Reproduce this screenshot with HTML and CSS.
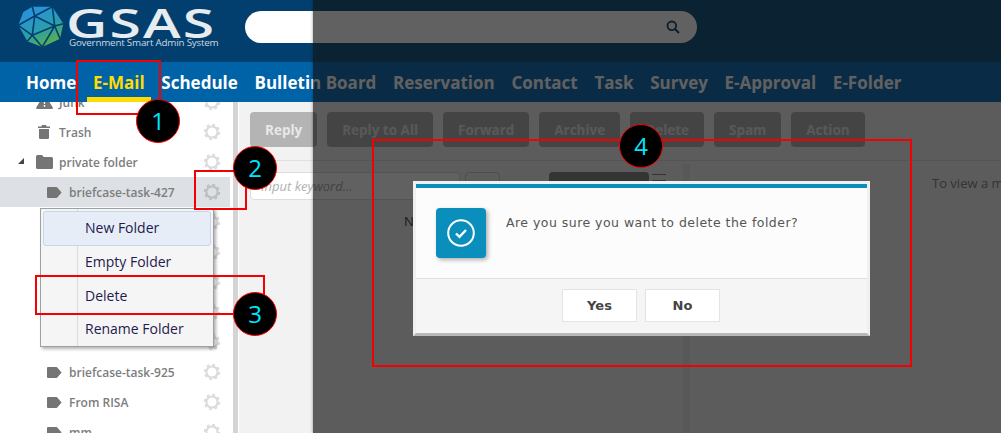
FILE: index.html
```html
<!DOCTYPE html>
<html lang="en">
<head>
    <meta charset="UTF-8">
    <title>GSAS - E-Mail</title>
    <link rel="stylesheet" href="styles.css">
</head>
<body>
    <svg class="defs" width="0" height="0">
        <symbol id="gear" viewBox="0 0 18 18">
            <circle cx="9" cy="9" r="5.6" fill="none" stroke="currentColor" stroke-width="2"/>
            <circle cx="9" cy="9" r="7.3" fill="none" stroke="currentColor" stroke-width="1.8" stroke-dasharray="2.87 2.86"/>
        </symbol>
        <symbol id="tag" viewBox="0 0 15 11">
            <path d="M1 0h8.5a1 1 0 0 1 .8.4L14.6 5.5l-4.3 5.1a1 1 0 0 1-.8.4H1a1 1 0 0 1-1-1V1a1 1 0 0 1 1-1z" fill="currentColor"/>
        </symbol>
        <symbol id="folder" viewBox="0 0 17 14">
            <path d="M1.5 0h4.6l1.6 2h7.8A1.5 1.5 0 0 1 17 3.5v9a1.5 1.5 0 0 1-1.5 1.5h-14A1.5 1.5 0 0 1 0 12.500v-11A1.5 1.5 0 0 1 1.500 0z" fill="currentColor"/>
        </symbol>
        <symbol id="trash" viewBox="0 0 12 14">
            <path d="M4 0h4l.6 1.400H12v1.700H0V1.400h3.400zM1 4h10v8.800a1.200 1.200 0 0 1-1.200 1.200H2.200A1.200 1.200 0 0 1 1 12.800z" fill="currentColor"/>
        </symbol>
        <symbol id="warn" viewBox="0 0 17 14">
            <path d="M8.500 0a1 1 0 0 1 .9.500l7.400 12a1 1 0 0 1-.9 1.500H1.100a1 1 0 0 1-.9-1.500L7.600.500a1 1 0 0 1 .9-.500z" fill="currentColor"/>
            <path d="M7.700 4h1.600l-.2 5H7.900zM7.700 10h1.600v1.700H7.700z" fill="#fff"/>
        </symbol>
    </svg>

    <div class="top-bar">
        <div class="logo">
            <svg class="logo-mark" width="46" height="42" viewBox="0 0 46 42">
                <defs>
                    <linearGradient id="logoFill" x1="0.2" y1="0" x2="0.7" y2="1">
                        <stop offset="0" stop-color="#2a90e4"/>
                        <stop offset="0.55" stop-color="#2a9db0"/>
                        <stop offset="1" stop-color="#62b23c"/>
                    </linearGradient>
                </defs>
                <path d="M14.300 1.700 34.300 1.700 45.300 18.700 42 33.700 24.300 42 9.300 36.300 .3 20.300 5.300 7z" fill="url(#logoFill)"/>
                <path d="M16.700 11 36.700 21 14.300 30.300zM16.700 11 14.300 1.700M16.700 11 34.300 1.700M36.700 21 34.300 1.700M36.700 21 45.300 18.700M36.700 21 42 33.700M36.700 21 24.300 42M14.300 30.300 24.300 42M14.300 30.300 9.300 36.300M14.300 30.300 .3 20.300M16.700 11 .3 20.300" fill="none" stroke="#033f6e" stroke-width="1.600"/>
            </svg>
            <div class="logo-text">
                <div class="logo-name">GSAS</div>
                <div class="logo-sub">Government Smart Admin System</div>
            </div>
        </div>
        <div class="search-box">
            <svg width="14" height="14" viewBox="0 0 14 14">
                <circle cx="5.800" cy="5.800" r="4.300" fill="none" stroke="#1d4f78" stroke-width="1.800"/>
                <path d="M9 9l4 4" stroke="#1d4f78" stroke-width="2"/>
            </svg>
        </div>
    </div>

    <nav class="main-nav">
        <a>Home</a>
        <a class="active">E-Mail</a>
        <a>Schedule</a>
        <a>Bulletin Board</a>
        <a>Reservation</a>
        <a>Contact</a>
        <a>Task</a>
        <a>Survey</a>
        <a>E-Approval</a>
        <a>E-Folder</a>
    </nav>

    <div class="workspace">
        <aside class="sidebar">
            <ul class="folder-list">
                <li class="folder"><svg class="ico"><use href="#warn"/></svg><span>Junk</span><svg class="gear"><use href="#gear"/></svg></li>
                <li class="folder"><svg class="ico ico-trash"><use href="#trash"/></svg><span>Trash</span><svg class="gear"><use href="#gear"/></svg></li>
                <li class="folder"><i class="caret"></i><svg class="ico"><use href="#folder"/></svg><span>private folder</span><svg class="gear"><use href="#gear"/></svg></li>
                <li class="folder sub selected"><svg class="ico-tag"><use href="#tag"/></svg><span>briefcase-task-427</span><svg class="gear"><use href="#gear"/></svg></li>
                <li class="folder sub"><svg class="gear"><use href="#gear"/></svg></li>
                <li class="folder sub"><svg class="gear"><use href="#gear"/></svg></li>
                <li class="folder sub"><svg class="gear"><use href="#gear"/></svg></li>
                <li class="folder sub"><svg class="gear"><use href="#gear"/></svg></li>
                <li class="folder sub"><svg class="gear"><use href="#gear"/></svg></li>
                <li class="folder sub"><svg class="ico-tag"><use href="#tag"/></svg><span>briefcase-task-925</span><svg class="gear"><use href="#gear"/></svg></li>
                <li class="folder sub"><svg class="ico-tag"><use href="#tag"/></svg><span>From RISA</span><svg class="gear"><use href="#gear"/></svg></li>
                <li class="folder sub"><svg class="ico-tag"><use href="#tag"/></svg><span>mm</span><svg class="gear"><use href="#gear"/></svg></li>
            </ul>
        </aside>
        <div class="splitter"></div>
        <main class="mail-area">
            <div class="toolbar">
                <button class="tool-btn first">Reply</button>
                <button class="tool-btn">Reply to All</button>
                <button class="tool-btn">Forward</button>
                <button class="tool-btn">Archive</button>
                <button class="tool-btn">Delete</button>
                <button class="tool-btn">Spam</button>
                <button class="tool-btn">Action</button>
            </div>
            <div class="panes">
                <section class="list-pane">
                    <div class="list-tools">
                        <div class="keyword">Input keyword...</div>
                        <div class="keyword-btn"></div>
                        <div class="sort-btn"></div>
                        <div class="sort-icon"></div>
                    </div>
                    <p class="no-data">No data</p>
                </section>
                <div class="pane-split"></div>
                <section class="read-pane">To view a message, select it from the list</section>
            </div>
        </main>
    </div>

    <div class="context-menu">
        <div class="menu-item hover">New Folder</div>
        <div class="menu-item">Empty Folder</div>
        <div class="menu-item">Delete</div>
        <div class="menu-item">Rename Folder</div>
    </div>

    <div class="mask"></div>

    <div class="dialog">
        <div class="dialog-body">
            <div class="dialog-icon">
                <svg width="30" height="30" viewBox="0 0 30 30">
                    <circle cx="15" cy="15" r="12.800" fill="none" stroke="#fff" stroke-width="2"/>
                    <path d="M10 15.500l3.500 3.300 6.500-6.800" fill="none" stroke="#fff" stroke-width="2.400"/>
                </svg>
            </div>
            <div class="dialog-text">Are you sure you want to delete the folder?</div>
        </div>
        <div class="dialog-foot">
            <button class="dialog-btn">Yes</button>
            <button class="dialog-btn">No</button>
        </div>
    </div>

    <div class="mark mark-1"></div>
    <div class="mark mark-2"></div>
    <div class="mark mark-3"></div>
    <div class="mark mark-4"></div>
    <div class="step step-1">1</div>
    <div class="step step-2">2</div>
    <div class="step step-3">3</div>
    <div class="step step-4">4</div>
</body>
</html>
```

FILE: styles.css
```css
* {
    box-sizing: border-box;
}

html, body {
    margin: 0;
    padding: 0;
    height: 433px;
    overflow: hidden;
}

body {
    position: relative;
    display: flex;
    flex-direction: column;
    font-family: "Open Sans", sans-serif;
    background-color: #ffffff;
}

.defs {
    position: absolute;
}

/* header */
.top-bar {
    height: 62px;
    flex: none;
    display: flex;
    align-items: flex-start;
    background-color: #033f6e;
    background-image: linear-gradient(to right, #033f6e 313px, #1d5984 313px);
}

.logo {
    display: flex;
    width: 245px;
    padding: 5px 0 0 18px;
}

.logo-mark {
    flex: none;
}

.logo-text {
    margin-left: 5px;
    color: #e6ecf0;
}

.logo-name {
    margin-left: -3px;
    padding-top: 3px;
    height: 32px;
    font-weight: 600;
    font-size: 39px;
    line-height: 29px;
    letter-spacing: 1.500px;
    white-space: nowrap;
    transform: scaleX(1.46);
    transform-origin: left center;
}

.logo-sub {
    font-size: 9.800px;
    line-height: 11px;
    letter-spacing: -0.2px;
    color: #cdd8e0;
    white-space: nowrap;
}

.search-box {
    width: 452px;
    height: 32px;
    margin-top: 11px;
    padding-right: 17px;
    display: flex;
    align-items: center;
    justify-content: flex-end;
    background-color: #ffffff;
    border-radius: 16px;
}

/* main menu */
.main-nav {
    height: 40px;
    flex: none;
    display: flex;
    padding-left: 20px;
    gap: 4.700px;
    background-color: #0063a8;
    background-image: linear-gradient(to right, #0063a8 313px, #1a71b5 313px);
}

.main-nav a {
    padding: 0 6px;
    font-size: 17px;
    font-weight: bold;
    line-height: 42px;
    color: #ffffff;
    white-space: nowrap;
}

.main-nav a.active {
    color: #ffdd00;
    border-bottom: 5px solid #ffdd00;
}

.workspace {
    flex: 1;
    display: flex;
    min-height: 0;
}

/* folders */
.sidebar {
    width: 233px;
    flex: none;
    overflow: hidden;
    background-color: #ffffff;
}

.folder-list {
    list-style: none;
    margin: -15px 0 0 0;
    padding: 0 3px 0 0;
}

.folder {
    position: relative;
    height: 30px;
    display: flex;
    align-items: center;
    padding-left: 36px;
    font-size: 12px;
    font-weight: 600;
    color: #7d7d7d;
}

.folder.sub {
    padding-left: 47px;
}

.folder.selected {
    background-color: #dde0e4;
}

.ico {
    width: 17px;
    height: 14px;
    margin-right: 6px;
    color: #757575;
}

.ico-trash {
    width: 12px;
    margin-left: 2px;
    margin-right: 9px;
}

.ico-tag {
    width: 15px;
    height: 11px;
    margin-right: 7px;
    color: #757575;
}

.caret {
    position: absolute;
    left: 18px;
    top: 11px;
    width: 6px;
    height: 6px;
    background-color: #444444;
    clip-path: polygon(100% 0, 100% 100%, 0 100%);
}

.gear {
    position: absolute;
    left: 203px;
    top: 6px;
    width: 18px;
    height: 18px;
    color: #dadada;
}

.selected .gear {
    color: #bdbdbd;
}

.splitter {
    width: 6px;
    flex: none;
    background-color: #d4d4d4;
    border-right: 1px solid #ffffff;
}

/* mail area */
.mail-area {
    flex: 1;
    min-width: 0;
    display: flex;
    flex-direction: column;
    background-color: #f2f2f2;
}

.toolbar {
    height: 59px;
    flex: none;
    display: flex;
    gap: 9.900px;
    padding: 10px 0 0 11px;
    border-bottom: 1px solid #e0e0e0;
}

.tool-btn {
    height: 35px;
    padding: 0 15px;
    border: none;
    border-radius: 4px;
    background-color: #b4b4b4;
    color: #e8e8e8;
    font-family: "Open Sans", sans-serif;
    font-size: 13.500px;
    font-weight: bold;
}

.panes {
    flex: 1;
    display: flex;
    min-height: 0;
}

.list-pane {
    width: 444px;
    flex: none;
}

.list-tools {
    display: flex;
    padding: 11px 0 0 11px;
}

.keyword {
    width: 210px;
    height: 28px;
    padding-left: 10px;
    border: 1px solid #dddddd;
    border-radius: 4px;
    background-color: #ffffff;
    font-size: 13px;
    font-style: italic;
    line-height: 26px;
    color: #b0b0b0;
}

.keyword-btn {
    width: 35px;
    height: 28px;
    margin-left: 5px;
    border: 1px solid #cccccc;
    border-radius: 4px;
}

.sort-btn {
    width: 100px;
    height: 28px;
    margin-left: 49px;
    border-radius: 4px;
    background-color: #8a8a8a;
}

.sort-icon {
    width: 14px;
    height: 7px;
    margin: 2px 0 0 3px;
    border-top: 1px solid #888888;
    border-bottom: 1px solid #888888;
}

.no-data {
    margin: 12px 0 0 165px;
    font-size: 13px;
    color: #444444;
}

.pane-split {
    width: 7px;
    flex: none;
    margin-top: 3px;
    background-color: #e6e6e6;
}

.read-pane {
    flex: 1;
    padding: 12px 0 0 242px;
    overflow: hidden;
    font-size: 13px;
    line-height: 20px;
    color: #888888;
    white-space: nowrap;
}

/* folder popup */
.context-menu {
    position: absolute;
    left: 40px;
    top: 208px;
    width: 174px;
    height: 139px;
    padding: 2px;
    border: 1px solid #a0a0a0;
    background-color: #f5f5f5;
    background-image: linear-gradient(#dcdcdc, #dcdcdc);
    background-size: 1px 100%;
    background-position: 36px 0;
    background-repeat: no-repeat;
    box-shadow: 2px 2px 3px rgba(0, 0, 0, 0.3);
}

.menu-item {
    height: 33.500px;
    padding-left: 41px;
    font-size: 14px;
    line-height: 31px;
    color: #241a4e;
    border: 1px solid transparent;
}

.menu-item.hover {
    height: 35px;
    margin-bottom: -1px;
    line-height: 32px;
    background-color: #e6edf6;
    border-color: #c5d7eb;
    border-radius: 3px;
}

/* dark layer over the page */
.mask {
    position: absolute;
    left: 313px;
    top: 0;
    right: 0;
    bottom: 0;
    background-color: rgba(0, 0, 0, 0.62);
    box-shadow: 0 0 3px rgba(0, 0, 0, 0.4);
}

.dialog {
    position: absolute;
    left: 413px;
    top: 181px;
    width: 457px;
    height: 155px;
    display: flex;
    flex-direction: column;
    border: 3px solid #f0f0f0;
    border-bottom-color: #b8b8b8;
    font-family: "DejaVu Sans", sans-serif;
}

.dialog-body {
    height: 95px;
    flex: none;
    display: flex;
    padding: 20px 0 0 20px;
    background-color: #fcfcfc;
    border-top: 4px solid #0a8fbd;
    border-bottom: 1px solid #e0e0e0;
}

.dialog-icon {
    width: 50px;
    height: 50px;
    display: flex;
    align-items: center;
    justify-content: center;
    background-color: #0a8fbd;
    border-radius: 4px;
    box-shadow: 2px 2px 4px rgba(0, 0, 0, 0.3);
}

.dialog-text {
    margin-left: 20px;
    font-size: 12.500px;
    line-height: 30px;
    letter-spacing: 0.470px;
    color: #555555;
}

.dialog-foot {
    flex: 1;
    display: flex;
    justify-content: center;
    gap: 8px;
    padding: 10px 1px 0 0;
    background-color: #f5f5f5;
}

.dialog-btn {
    width: 75px;
    height: 33px;
    border: 1px solid #e4e4e4;
    background-color: #ffffff;
    font-family: "DejaVu Sans", sans-serif;
    font-size: 13px;
    font-weight: bold;
    color: #444444;
}

/* tutorial callouts */
.mark {
    position: absolute;
    border: 2px solid #f40000;
}

.mark-1 {
    left: 76px;
    top: 60px;
    width: 85px;
    height: 55px;
}

.mark-2 {
    left: 194px;
    top: 170px;
    width: 53px;
    height: 40px;
}

.mark-3 {
    left: 35px;
    top: 275px;
    width: 230px;
    height: 40px;
}

.mark-4 {
    left: 372px;
    top: 139px;
    width: 540px;
    height: 228px;
}

.step {
    position: absolute;
    width: 44px;
    height: 44px;
    border: 1px solid #f40000;
    border-radius: 50%;
    background-color: #000000;
    color: #00e5ff;
    font-size: 24px;
    line-height: 42px;
    text-align: center;
}

.step-1 {
    left: 136px;
    top: 99px;
}

.step-2 {
    left: 233px;
    top: 146px;
}

.step-3 {
    left: 233px;
    top: 292px;
}

.step-4 {
    left: 619px;
    top: 124px;
}
```
